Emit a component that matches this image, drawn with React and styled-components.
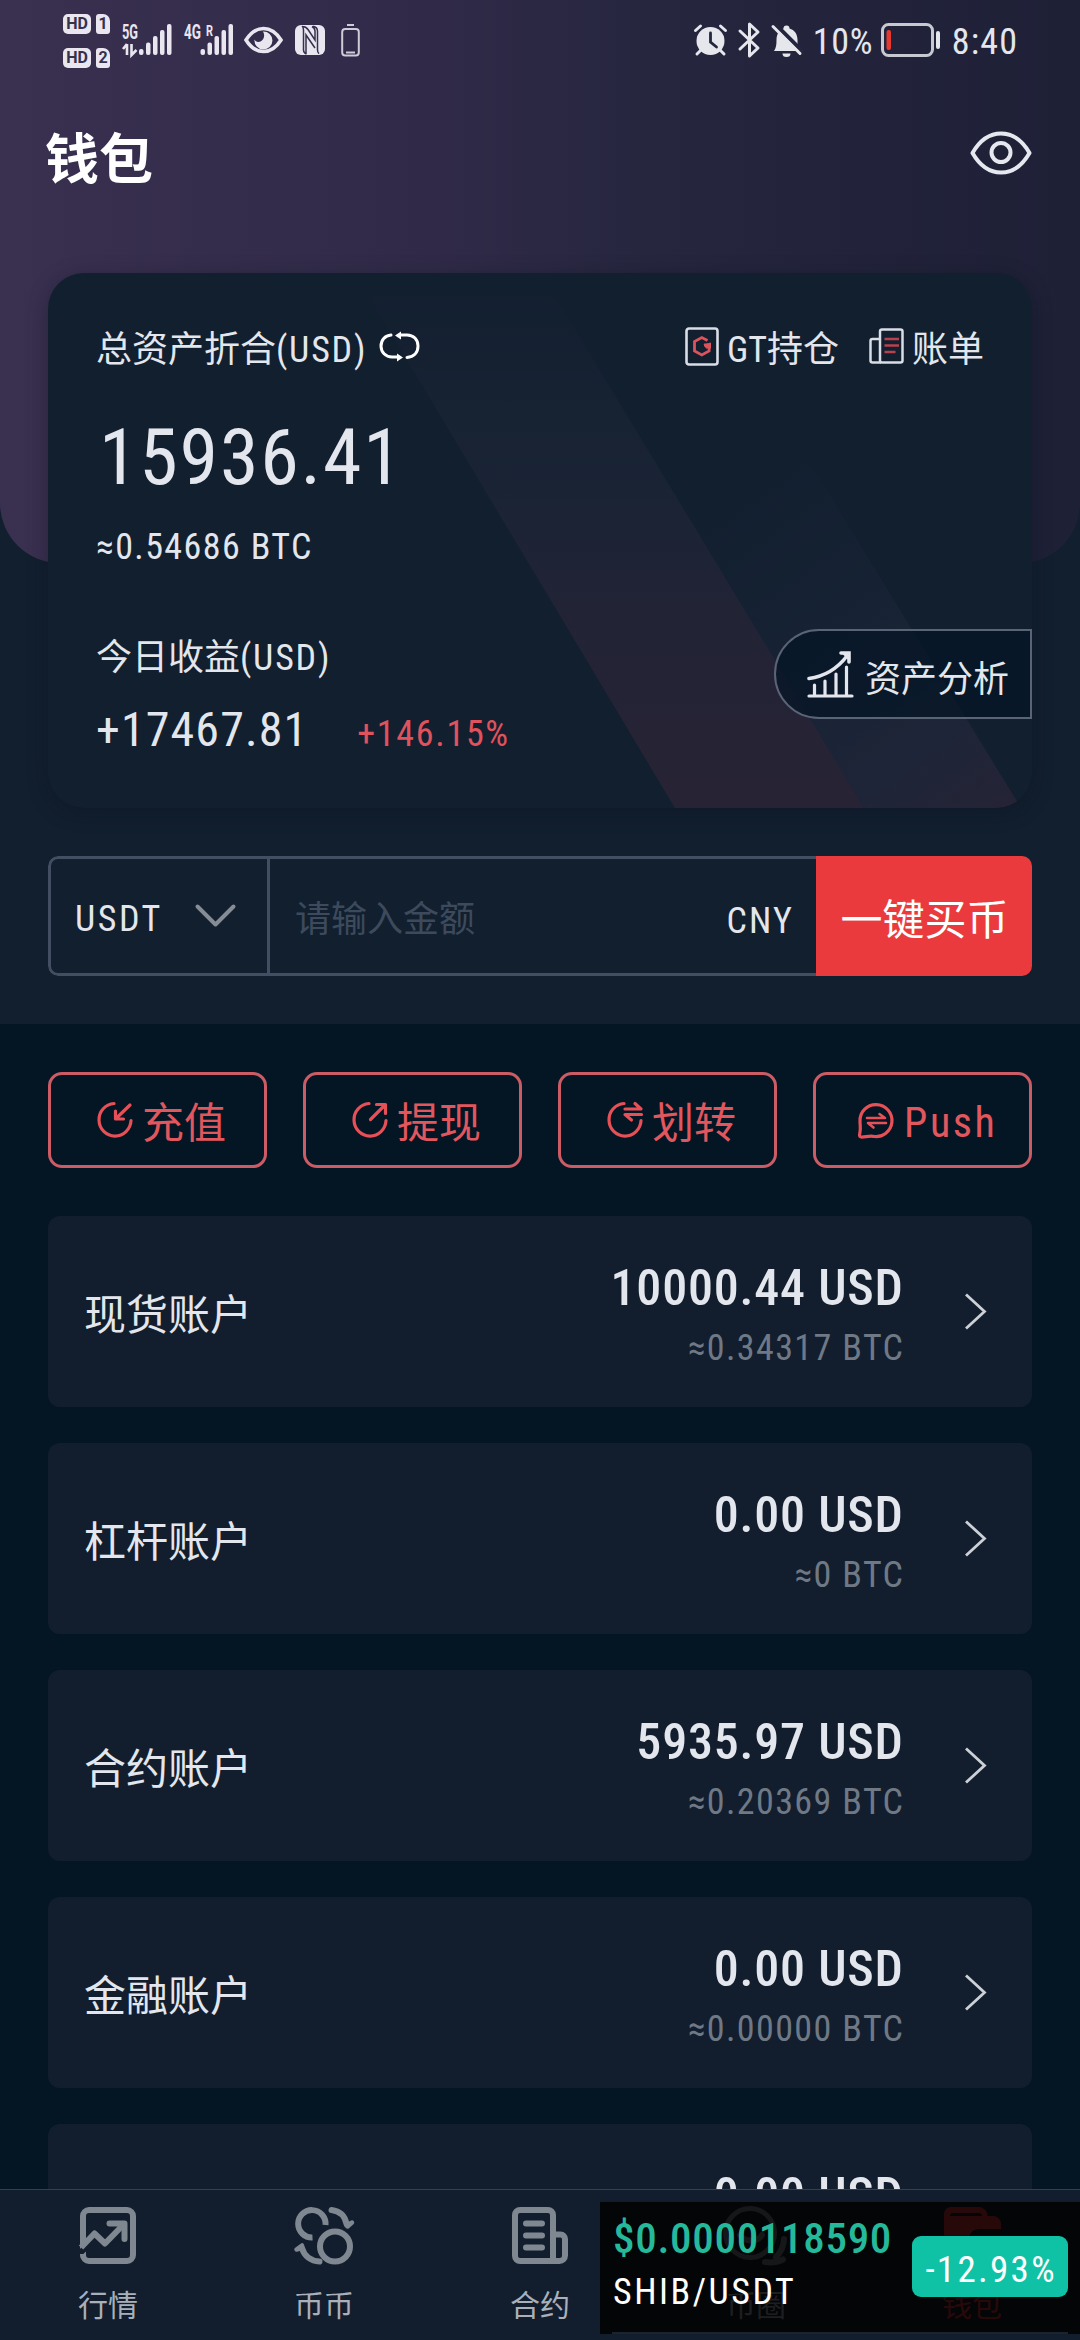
import React from 'react';
import styled, { createGlobalStyle, css } from 'styled-components';

const Global = createGlobalStyle`
  * { box-sizing: border-box; }
  body { margin: 0; background: #041624; }
`;

const cjk = `Roboto, "Noto Sans CJK SC", sans-serif`;

const Screen = styled.div`
  position: relative;
  width: 1080px;
  height: 2340px;
  overflow: hidden;
  display: flex;
  flex-direction: column;
  background: #041624;
  color: #e3e7ed;
  font-family: ${cjk};
  svg { display: block; flex: none; overflow: visible; }
`;

const Latin = styled.span`
  font-family: Roboto, "Liberation Sans", sans-serif;
  font-stretch: 85%;
  font-size: ${(p) => p.$size || 36}px;
  font-weight: ${(p) => p.$weight || 400};
  letter-spacing: ${(p) => p.$ls || 0}px;
  margin-right: -${(p) => p.$ls || 0}px;
  padding-top: ${(p) => p.$drop || 0}px;
  white-space: nowrap;
`;

const Content = styled.main`
  height: 2189px;
  overflow: hidden;
`;

const TopPanel = styled.section`
  height: 1024px;
  background: #121f2f;
`;

const Hero = styled.header`
  height: 563px;
  border-radius: 0 0 60px 60px;
  background: linear-gradient(90deg, #3a3050 0%, #302a48 40%, #26263f 60%, #1e2036 100%);
`;

const StatusBar = styled.div`
  height: 80px;
  padding: 0 63px;
  display: flex;
  justify-content: space-between;
  align-items: center;
`;

const StatusGroup = styled.div`
  display: flex;
  align-items: center;
  gap: ${(p) => p.$gap}px;
`;

const BatterySlot = styled.span`
  display: flex;
  margin-left: ${(p) => p.$ml}px;
`;

const SimStack = styled.div`
  display: flex;
  flex-direction: column;
  gap: 14px;
  padding-top: 2px;
`;

const SimLine = styled.div`
  display: flex;
  gap: 5px;
`;

const Tag = styled.span`
  width: ${(p) => p.$w}px;
  height: 20px;
  border-radius: ${(p) => (p.$sim ? '3px 7px 3px 3px' : '5px')};
  background: #e9e6f0;
  color: #35304c;
  font: 700 16px/20px Roboto, sans-serif;
  text-align: center;
`;

const TitleRow = styled.div`
  display: flex;
  justify-content: space-between;
  align-items: center;
  height: 80px;
  margin-top: 36px;
  padding: 0 48px 0 45px;
  > svg { margin-bottom: 6px; }
`;

const Title = styled.h1`
  margin: 0;
  font: 700 54px/80px "Noto Sans CJK SC", sans-serif;
  color: #fff;
`;

const Card = styled.div`
  display: grid;
  width: 984px;
  height: 535px;
  margin: -290px 48px 0;
  border-radius: 36px;
  overflow: hidden;
  background: #121f2f;
  box-shadow: 0 4px 20px rgba(8, 16, 30, 0.35);
  > * { grid-area: 1 / 1; }
`;

const CardBody = styled.div`
  z-index: 1;
  padding: 51px 0 0 48px;
`;

const Line = styled.div`
  display: flex;
  align-items: ${(p) => p.$align || 'center'};
  height: ${(p) => p.$h}px;
  margin-top: ${(p) => p.$mt || 0}px;
  padding-left: ${(p) => p.$pl || 0}px;
  line-height: ${(p) => p.$h}px;
  font-size: 36px;
  white-space: nowrap;
  svg { margin-bottom: 8px; }
`;

const SwapButton = styled.span`
  display: flex;
  margin-left: 14px;
`;

const Links = styled.div`
  display: flex;
  align-items: center;
  margin-left: auto;
  padding-right: 48px;
`;

const LinkItem = styled.div`
  display: flex;
  align-items: center;
  gap: 8px;
  margin-left: 30px;
`;

const SplitRow = styled.div`
  display: flex;
  justify-content: space-between;
  margin-top: 46px;
`;

const Percent = styled(Latin)`
  margin-left: 50px;
  color: #e0525c;
`;

const AnalysisButton = styled.button`
  display: flex;
  align-items: center;
  gap: 11px;
  width: 258px;
  height: 90px;
  margin-top: 11px;
  padding: 0 0 0 31px;
  border: 2px solid #596476;
  border-radius: 45px 0 0 45px;
  background: rgba(6, 22, 38, 0.75);
  color: #e3e7ed;
  font: 400 36px/50px "Noto Sans CJK SC", sans-serif;
  span { margin-top: 3px; }
`;

const BuyBar = styled.div`
  display: flex;
  width: 984px;
  height: 120px;
  margin: 48px 48px 0;
  border-radius: 10px;
  overflow: hidden;
`;

const Field = styled.div`
  display: flex;
  align-items: center;
  justify-content: space-between;
  border: 3px solid #434e62;
  font-size: 36px;
  ${(p) => p.$select
    ? css`width: 222px; padding: 0 31px 0 24px; border-radius: 10px 0 0 10px;`
    : css`flex: 1; padding: 0 24px 0 25px; border-left: 0; border-right: 0;`}
`;

const Placeholder = styled.span`
  color: #3d4a5c;
`;

const BuyButton = styled.button`
  width: 216px;
  padding: 2px 0 0 1px;
  border: 0;
  background: #eb3a3d;
  color: #fff;
  font: 400 42px/60px "Noto Sans CJK SC", sans-serif;
`;

const Actions = styled.div`
  display: grid;
  grid-template-columns: repeat(4, 219px);
  gap: 36px;
  padding: 48px 48px 0;
`;

const ActionButton = styled.button`
  display: flex;
  align-items: center;
  gap: 8px;
  height: 96px;
  padding: 0 0 0 ${(p) => p.$pl}px;
  border: 3px solid #cb5b64;
  border-radius: 14px;
  background: none;
  color: #e2575d;
  font: 400 42px/60px ${cjk};
  svg { margin-left: -1px; }
  span { margin-top: 8px; }
`;

const PushLabel = styled(Latin)`
  && { margin: 5px 0 0 2px; }
`;

const Accounts = styled.div`
  display: flex;
  flex-direction: column;
  gap: 36px;
  padding: 48px 48px 0;
`;

const AccountRow = styled.div`
  display: flex;
  align-items: center;
  flex: none;
  height: 191px;
  padding: 0 45px 0 36px;
  border-radius: 12px;
  background: #121e2e;
`;

const AccountName = styled.div`
  flex: 1;
  padding-top: 9px;
  font-size: 42px;
  line-height: 60px;
`;

const Amounts = styled.div`
  display: flex;
  flex-direction: column;
  align-items: flex-end;
  margin-right: 61px;
  padding-top: 13px;
`;

const AmountLine = styled.div`
  height: 60px;
  line-height: 60px;
  color: ${(p) => (p.$dim ? '#6f7986' : '#e3e7ed')};
`;

const NavBar = styled.nav`
  display: grid;
  grid-template-columns: repeat(5, 1fr);
  height: 151px;
  border-top: 1px solid #33414f;
  background: #121e2e;
`;

const NavItem = styled.div`
  display: flex;
  flex-direction: column;
  align-items: center;
  padding-top: 17px;
  color: ${(p) => (p.$active ? '#eb3a3d' : '#7f8790')};
`;

const NavLabel = styled.span`
  margin-top: 19px;
  font-size: 30px;
  line-height: 44px;
  color: ${(p) => (p.$active ? '#eb3a3d' : '#a9b0ba')};
`;

const Ticker = styled.aside`
  position: absolute;
  left: 600px;
  top: 2202px;
  width: 480px;
  height: 132px;
  padding: 0 12px;
  background: rgba(0, 0, 0, 0.83);
`;

const TickerBody = styled.div`
  display: flex;
  align-items: center;
  justify-content: space-between;
  height: 132px;
  border-bottom: 2px solid #1b232d;
`;

const TickerText = styled.div`
  display: flex;
  flex-direction: column;
  padding: 0 0 4px 1px;
  color: #fff;
  line-height: 54px;
`;

const Price = styled(Latin)`
  color: #25b99b;
`;

const Badge = styled.div`
  width: 156px;
  height: 61px;
  margin-bottom: 1px;
  border-radius: 9px;
  background: #10c2a5;
  color: #fff;
  text-align: center;
  line-height: 68px;
`;

const Signal = ({ label, roam, arrows }) => (
  <svg width={arrows ? 50 : 48} height="34" viewBox={`0 0 ${arrows ? 50 : 48} 34`} fill="#e9e6f0">
    <text x="0" y="16" fontFamily="Roboto" fontWeight="700" fontSize="20" textLength={roam ? 17 : 16} lengthAdjust="spacingAndGlyphs">{label}</text>
    {roam && <text x="22" y="13" fontFamily="Roboto" fontWeight="700" fontSize="15" textLength="7" lengthAdjust="spacingAndGlyphs">R</text>}
    {arrows && <path d="M5 21v11M1 26l4-5M9.500 21v11l5-5" stroke="#e9e6f0" strokeWidth="2.600" fill="none" />}
    {[26, 19.500, 13, 7, 1].map((y, i) => (
      <rect key={y} x={(arrows ? 17 : 16.500) + i * 7} y={y} width="4.500" height={32 - y} rx="2" />
    ))}
  </svg>
);

const StatusEye = () => (
  <svg width="39" height="28" viewBox="0 0 39 28">
    <path d="M2 14C7 6 13 2.500 19.500 2.500S32 6 37 14C32 22 26 25.500 19.500 25.500S7 22 2 14Z" fill="none" stroke="#e9e6f0" strokeWidth="3.600" />
    <path d="M19 5.500a9 9 0 1 1-8.500 8 4.500 4.500 0 0 0 6 2c3-1.200 5-5.500 2.500-10Z" fill="#e9e6f0" />
  </svg>
);

const Nfc = () => (
  <svg width="30" height="30" viewBox="0 0 30 30">
    <rect width="30" height="30" rx="6" fill="#e9e6f0" />
    <path d="M7 1c1.200 1 1.500 2 1.500 4v20c0 2 .5 3 3 4M11 29V10l9 13M7.500 1.500c2 0 4 1 5.500 3L20 15V6c0-2-.5-3-3-4.500M18 1.200c3 .5 4.500 2 4.500 5v18.500c0 2 .3 3 1.500 4" fill="none" stroke="#35304c" strokeWidth="1.500" />
  </svg>
);

const SmallBattery = () => (
  <svg width="19" height="33" viewBox="0 0 19 33" fill="none" stroke="#cfccda" strokeWidth="2">
    <path d="M6 1h7M5 28.500h9" />
    <rect x="1.200" y="5" width="16.600" height="26.500" rx="3" />
  </svg>
);

const Alarm = () => (
  <svg width="33" height="32" viewBox="0 0 33 32">
    <circle cx="16.500" cy="17" r="14" fill="#e6e7ec" />
    <path d="M1.500 6.500L6.500 2M31.500 6.500L26.500 2M7 26l-4 4M26 26l4 4" stroke="#e6e7ec" strokeWidth="3" strokeLinecap="round" />
    <path d="M16.500 9v9l6 5" stroke="#24263f" strokeWidth="2.800" fill="none" strokeLinecap="round" />
  </svg>
);

const Bluetooth = () => (
  <svg width="22" height="36" viewBox="0 0 22 36" fill="none" stroke="#e6e7ec" strokeWidth="3" strokeLinecap="round" strokeLinejoin="round">
    <path d="M2 9l18 17-8.500 8V2l8.500 8L2 27" />
  </svg>
);

const Muted = () => (
  <svg width="31" height="33" viewBox="0 0 31 33">
    <path d="M3 27c2-3 2.500-6 2.500-11 0-6 3-10 7-11.500a3 3 0 0 1 6 0c5 1.500 8 5.500 8 11.500 0 5 0 8 2.500 11Z" fill="#e6e7ec" />
    <path d="M11.500 29.500h8a4 3.500 0 0 1-8 0Z" fill="#e6e7ec" />
    <path d="M4 0l28 28" stroke="#24263f" strokeWidth="4" />
    <path d="M2 2.500l27 27" stroke="#e6e7ec" strokeWidth="3" strokeLinecap="round" />
  </svg>
);

const Battery = () => (
  <svg width="60" height="34" viewBox="0 0 60 34">
    <rect x="1.500" y="1.500" width="50" height="31" rx="6" fill="none" stroke="#c6c8d2" strokeWidth="3" />
    <rect x="5.500" y="7" width="4.500" height="20" rx="2" fill="#e5392f" />
    <rect x="55" y="8" width="4" height="18" rx="2" fill="#e6e7ec" />
  </svg>
);

const BigEye = () => (
  <svg width="62" height="44" viewBox="0 0 62 44" fill="none" stroke="#e6e8ef" strokeWidth="4">
    <path d="M2.500 22C10 9 20 2.500 31 2.500S52 9 59.500 22C52 35 42 41.500 31 41.500S10 35 2.500 22Z" strokeLinejoin="round" />
    <circle cx="31" cy="21.500" r="9.500" />
  </svg>
);

const Stripes = () => (
  <svg width="984" height="535" viewBox="48 273 984 535">
    <defs>
      <linearGradient id="s1" gradientUnits="userSpaceOnUse" x1="0" y1="273" x2="0" y2="808">
        <stop offset="0" stopColor="#1f273a" stopOpacity="0" />
        <stop offset="0.350" stopColor="#1e2638" stopOpacity="0.550" />
        <stop offset="0.620" stopColor="#242437" stopOpacity="0.850" />
        <stop offset="1" stopColor="#282334" />
      </linearGradient>
      <linearGradient id="s2" gradientUnits="userSpaceOnUse" x1="800" y1="440" x2="1060" y2="808">
        <stop offset="0" stopColor="#1a2638" stopOpacity="0" />
        <stop offset="0.400" stopColor="#1b2638" stopOpacity="0.550" />
        <stop offset="0.720" stopColor="#1f2538" stopOpacity="0.950" />
        <stop offset="1" stopColor="#272335" />
      </linearGradient>
    </defs>
    <path d="M355 273H541L864 808H675Z" fill="url(#s1)" />
    <path d="M641 440H796L1021 808H864Z" fill="url(#s2)" />
  </svg>
);

const Swap = () => (
  <svg width="41" height="31" viewBox="0 0 41 31" fill="none" stroke="#fff" strokeWidth="3" strokeLinecap="round">
    <path d="M12 4C6 4.500 2 9 2 15s4.500 11 11 11h7M28 26.500c7-.5 11-5 11-11.500S34.500 4 28 4h-6" />
    <path d="M16 4.500l6-4v8ZM24 26.500l-6-4v8Z" fill="#fff" stroke="none" />
  </svg>
);

const GtIcon = () => (
  <svg width="34" height="39" viewBox="0 0 34 39" fill="none">
    <rect x="1.500" y="1.500" width="31" height="36" rx="2.500" stroke="#d8dde6" strokeWidth="2.600" />
    <path d="M22.500 13.500L16.800 10.500 9.500 14.500v9.500l7.300 4 7.300-4v-6h-5" stroke="#dd535c" strokeWidth="2.800" />
    <path d="M18.500 17.500l7.500-2v6h-5Z" fill="#dd535c" />
  </svg>
);

const BillIcon = () => (
  <svg width="35" height="36" viewBox="0 0 35 36" fill="none" stroke="#d8dde6" strokeWidth="2.500">
    <rect x="11" y="1.500" width="22.500" height="33" rx="2" />
    <path d="M11 11H3.500a2 2 0 0 0-2 2v19.500a2 2 0 0 0 2 2H12" />
    <path d="M15.500 11h14.500M15.500 17.500h14.500M15.500 24h11" stroke="#b9404d" strokeWidth="2.300" />
  </svg>
);

const ChartIcon = () => (
  <svg width="47" height="47" viewBox="0 0 47 47" fill="none" stroke="#e3e7ed" strokeWidth="3.200" strokeLinecap="round">
    <path d="M2 45h43M7.500 34v10M18 30v14M29 23v21M39.500 16v28" />
    <path d="M2 27.500C17 25.500 30 18 40 5M34 2h8v9" strokeWidth="3.600" />
    <path d="M34 1.500h9v9Z" fill="#e3e7ed" stroke="none" />
  </svg>
);

const ChevronDown = () => (
  <svg width="41" height="24" viewBox="0 0 41 24" fill="none" stroke="#868c95" strokeWidth="4" strokeLinecap="round" strokeLinejoin="round">
    <path d="M2.500 2.500L20.500 20.500 38.500 2.500" />
  </svg>
);

const ChevronRight = () => (
  <svg width="23" height="37" viewBox="0 0 23 37" fill="none" stroke="#cdd1d7" strokeWidth="2.800">
    <path d="M2 1.500L20.500 18.500 2 35.500" />
  </svg>
);

const ActionIcon = ({ kind }) => (
  <svg width="37" height="38" viewBox="0 0 37 38" fill="none" stroke="#e65056" strokeWidth="3.200" strokeLinecap="round" strokeLinejoin="round">
    {kind === 'push'
      ? <path d="M3 20.500A16 16 0 1 1 16 35.300c-4-.6-8.500 1-12 .7-2-.2-1.500-2-1-5 .8-4 0-7 0-10.500Z" />
      : <path d="M17 2.500A16 16.300 0 1 0 34 19.500" />}
    {kind === 'in' && <path d="M33 4L19 17.500M18.500 10v8h8" />}
    {kind === 'out' && <path d="M18.500 18.500L33 4M24.500 3.500H33.500V12.500" />}
    {kind === 'transfer' && <path d="M18 8h16l-6-5.500M34.500 13.500H18l6.500 5.500" />}
    {kind === 'push' && <path d="M10 17h18l-5.500-4M29 22H11l5.500 4.500" strokeWidth="2.600" />}
  </svg>
);

const NavIcon = ({ kind }) => (
  <svg width="60" height="58" viewBox="0 0 60 58" fill="none" stroke="currentColor" strokeWidth="6" strokeLinecap="round" strokeLinejoin="round">
    {kind === 'market' && (
      <g strokeLinecap="butt">
        <path d="M5 47v1a6 6 0 0 0 6 6H49a6 6 0 0 0 6-6V9a6 6 0 0 0-6-6H11a6 6 0 0 0-6 6V36" />
        <path d="M3 40.500L16.500 26.500 27 36.500 46 17" />
        <path d="M2 36H8V35L2 42ZM2 50L8 44.500V50Z" fill="currentColor" stroke="none" />
        <path d="M31.500 16.500H46.500V32" strokeLinecap="round" />
      </g>
    )}
    {kind === 'spot' && (
      <>
        <circle cx="41" cy="39.500" r="15" />
        <path d="M31.500 18A13.700 13.700 0 1 0 18.500 30.500" strokeLinecap="butt" />
        <path d="M37.500 3C46 4 51 9 52.500 17M25.500 54.500C17 54 10 49 8 41" />
        <path d="M52.500 18.500L58 15.500 53.500 19.500Z" strokeWidth="4.500" fill="currentColor" />
        <path d="M2.500 42.500L8 38.500V41Z" strokeWidth="4.500" fill="currentColor" />
      </>
    )}
    {kind === 'contract' && (
      <>
        <path d="M43 54H10a5 5 0 0 1-5-5V8a5 5 0 0 1 5-5H38a5 5 0 0 1 5 5V54H49.500a5.500 5.500 0 0 0 5.500-5.500V32a4.500 4.500 0 0 0-4.500-4.500H45" />
        <path d="M16 16.500H32M16 28.500H32M16 40.500H32" />
      </>
    )}
    {kind === 'circle' && (
      <>
        <circle cx="24" cy="26" r="24.500" strokeWidth="5" />
        <path d="M58 32c0 8-3 13-8 18M39 55c7 1 13 0 18-2.500" strokeWidth="6" />
        <path d="M14 28a12 9 0 0 0 22 0" />
      </>
    )}
    {kind === 'wallet' && (
      <path
        d="M2 57V7a7 7 0 0 1 7-7H37a9 9 0 0 1 8.500 9H51a8 8 0 0 1 8 8v5H38c-7 0-11 4-11 10s4 10 11 10h21v9a6 6 0 0 1-6 6ZM11 6a3 3 0 0 0-3 3H40a3 3 0 0 0-3-3Z"
        fill="currentColor"
        fillRule="evenodd"
        stroke="none"
      />
    )}
  </svg>
);

const accounts = [
  ['现货账户', '10000.44 USD', '≈0.34317 BTC'],
  ['杠杆账户', '0.00 USD', '≈0 BTC'],
  ['合约账户', '5935.97 USD', '≈0.20369 BTC'],
  ['金融账户', '0.00 USD', '≈0.00000 BTC'],
  ['', '0.00 USD', ''],
];

const actions = [
  ['in', '充值'],
  ['out', '提现'],
  ['transfer', '划转'],
];

const tabs = [
  ['market', '行情'],
  ['spot', '币币'],
  ['contract', '合约'],
  ['circle', '币圈'],
  ['wallet', '钱包'],
];

export default function App() {
  return (
    <Screen>
      <Global />
      <Content>
        <TopPanel>
          <Hero>
            <StatusBar>
              <StatusGroup $gap={12}>
                <SimStack>
                  <SimLine><Tag $w={28}>HD</Tag><Tag $w={14} $sim>1</Tag></SimLine>
                  <SimLine><Tag $w={28}>HD</Tag><Tag $w={14} $sim>2</Tag></SimLine>
                </SimStack>
                <Signal label="5G" arrows />
                <Signal label="4G" roam />
                <StatusEye />
                <Nfc />
                <BatterySlot $ml={4}><SmallBattery /></BatterySlot>
              </StatusGroup>
              <StatusGroup $gap={11}>
                <Alarm />
                <Bluetooth />
                <Muted />
                <Latin $ls={0.8} $drop={4}>10%</Latin>
                <BatterySlot $ml={-3}><Battery /></BatterySlot>
                <Latin $ls={1.2} $drop={4}>8:40</Latin>
              </StatusGroup>
            </StatusBar>
            <TitleRow>
              <Title>钱包</Title>
              <BigEye />
            </TitleRow>
          </Hero>
          <Card>
            <Stripes />
            <CardBody>
              <Line $h={52}>
                <span>总资产折合</span><Latin $ls={1.8}>(USD)</Latin><SwapButton><Swap /></SwapButton>
                <Links>
                  <LinkItem><GtIcon /><span><Latin>GT</Latin>持仓</span></LinkItem>
                  <LinkItem><BillIcon /><span>账单</span></LinkItem>
                </Links>
              </Line>
              <Line $h={90} $mt={37} $pl={3}><Latin $size={78} $ls={1.8}>15936.41</Latin></Line>
              <Line $h={50} $mt={19}><Latin $ls={1.4}>≈0.54686 BTC</Latin></Line>
              <SplitRow>
                <div>
                  <Line $h={52} $mt={14}><span>今日收益</span><Latin $ls={1.8}>(USD)</Latin></Line>
                  <Line $h={60} $mt={16} $align="baseline"><Latin $size={48} $ls={1.1}>+17467.81</Latin><Percent $ls={1.7}>+146.15%</Percent></Line>
                </div>
                <AnalysisButton><ChartIcon /><span>资产分析</span></AnalysisButton>
              </SplitRow>
            </CardBody>
          </Card>
          <BuyBar>
            <Field $select><Latin $ls={2.5} $drop={6}>USDT</Latin><ChevronDown /></Field>
            <Field><Placeholder>请输入金额</Placeholder><Latin $ls={2.2} $drop={10}>CNY</Latin></Field>
            <BuyButton>一键买币</BuyButton>
          </BuyBar>
        </TopPanel>
        <Actions>
          {actions.map(([kind, label]) => (
            <ActionButton key={kind} $pl={47}><ActionIcon kind={kind} /><span>{label}</span></ActionButton>
          ))}
          <ActionButton $pl={42}><ActionIcon kind="push" /><PushLabel $size={42} $ls={2.6}>Push</PushLabel></ActionButton>
        </Actions>
        <Accounts>
          {accounts.map(([name, usd, btc], i) => (
            <AccountRow key={i}>
              <AccountName>{name}</AccountName>
              <Amounts>
                <AmountLine><Latin $size={50} $weight={500} $ls={0.8}>{usd}</Latin></AmountLine>
                <AmountLine $dim><Latin $ls={1.4}>{btc}</Latin></AmountLine>
              </Amounts>
              <ChevronRight />
            </AccountRow>
          ))}
        </Accounts>
      </Content>
      <NavBar>
        {tabs.map(([kind, label]) => (
          <NavItem key={kind} $active={kind === 'wallet'}>
            <NavIcon kind={kind} />
            <NavLabel $active={kind === 'wallet'}>{label}</NavLabel>
          </NavItem>
        ))}
      </NavBar>
      <Ticker>
        <TickerBody>
          <TickerText>
            <Price $size={43} $weight={500} $ls={0.7}>$0.0000118590</Price>
            <Latin $ls={2.5}>SHIB/USDT</Latin>
          </TickerText>
          <Badge><Latin $size={37} $ls={2.3}>-12.93%</Latin></Badge>
        </TickerBody>
      </Ticker>
    </Screen>
  );
}
